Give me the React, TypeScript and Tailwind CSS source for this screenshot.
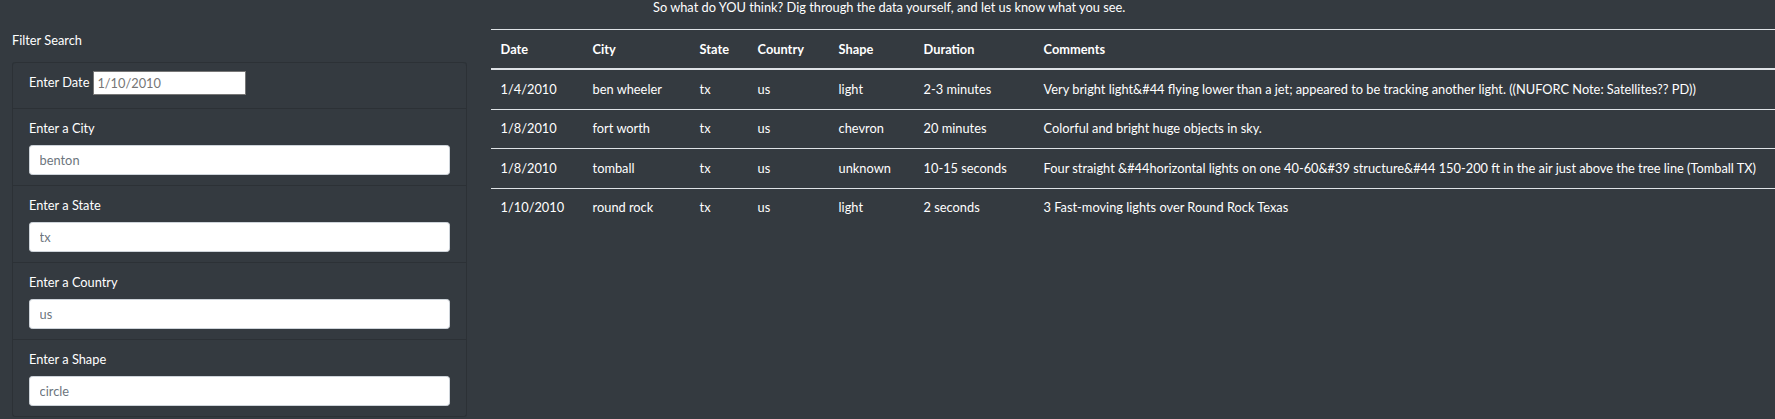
const rows: string[][] = [
  ["1/4/2010", "ben wheeler", "tx", "us", "light", "2-3 minutes", "Very bright light&#44 flying lower than a jet; appeared to be tracking another light. ((NUFORC Note: Satellites?? PD))"],
  ["1/8/2010", "fort worth", "tx", "us", "chevron", "20 minutes", "Colorful and bright huge objects in sky."],
  ["1/8/2010", "tomball", "tx", "us", "unknown", "10-15 seconds", "Four straight &#44horizontal lights on one 40-60&#39 structure&#44 150-200 ft in the air just above the tree line (Tomball TX)"],
  ["1/10/2010", "round rock", "tx", "us", "light", "2 seconds", "3 Fast-moving lights over Round Rock Texas"],
];

const headers = ["Date", "City", "State", "Country", "Shape", "Duration", "Comments"];
const widths = ["w-[92px]", "w-[107px]", "w-[58px]", "w-[81px]", "w-[85px]", "w-[120px]", "w-auto"];

const filters = [
  { label: "Enter a City", placeholder: "benton" },
  { label: "Enter a State", placeholder: "tx" },
  { label: "Enter a Country", placeholder: "us" },
  { label: "Enter a Shape", placeholder: "circle" },
];

const FilterItem = ({ label, placeholder }: { label: string; placeholder: string }) => (
  <li className="border-t border-[#2c3136] px-[16px] pt-[10px] pb-[10px]">
    <label className="block mb-[6.4px]">{label}</label>
    <input
      type="text"
      placeholder={placeholder}
      className="block w-full h-[30.4px] px-[9.6px] bg-white border border-[#ced4da] rounded-[3.2px] text-[#495057] placeholder:text-[#6c757d] outline-none"
    />
  </li>
);

export default function App() {
  return (
    <div className="w-[1775px] h-[419px] overflow-hidden bg-[#343a40] text-white text-[12.8px] leading-[19.2px] font-['Lato','Liberation_Sans',sans-serif]">
      <p className="-mt-[2px] pl-[653px] h-[19px]">
        So what do YOU think? Dig through the data yourself, and let us know what you see.
      </p>

      <div className="flex">
        <div className="w-[479px] shrink-0 px-[12px]">
          <p className="mt-[14px]">Filter Search</p>
          <ul className="mt-[12px] border border-[#2c3136] border-t-0 rounded-[3.2px]">
            <li className="border-t border-[#2c3136] rounded-t-[3.2px] px-[16px] pt-[6px] pb-[12px]">
              <div className="flex items-center h-[27px] gap-[4px]">
                <label>Enter Date</label>
                <input
                  type="text"
                  placeholder="1/10/2010"
                  className="w-[153px] h-[24px] px-[3px] bg-white border border-[#767676] text-black placeholder:text-[#757575] outline-none"
                />
              </div>
            </li>
            {filters.map((f) => (
              <FilterItem key={f.label} label={f.label} placeholder={f.placeholder} />
            ))}
          </ul>
        </div>

        <div className="pl-[12px] shrink-0">
          <table className="mt-[12px] w-[1410px] table-fixed border-collapse">
            <thead>
              <tr>
                {headers.map((h, i) => (
                  <th
                    key={h}
                    className={`${widths[i]} text-left font-bold px-[9.6px] py-[9.6px] border-t border-b-2 border-[#dee2e6]`}
                  >
                    {h}
                  </th>
                ))}
              </tr>
            </thead>
            <tbody>
              {rows.map((r, ri) => (
                <tr key={ri}>
                  {r.map((c, ci) => (
                    <td
                      key={ci}
                      className={`px-[9.6px] py-[9.6px] whitespace-nowrap ${ri > 0 ? "border-t border-[#dee2e6]" : ""}`}
                    >
                      {c}
                    </td>
                  ))}
                </tr>
              ))}
            </tbody>
          </table>
        </div>
      </div>
    </div>
  );
}
